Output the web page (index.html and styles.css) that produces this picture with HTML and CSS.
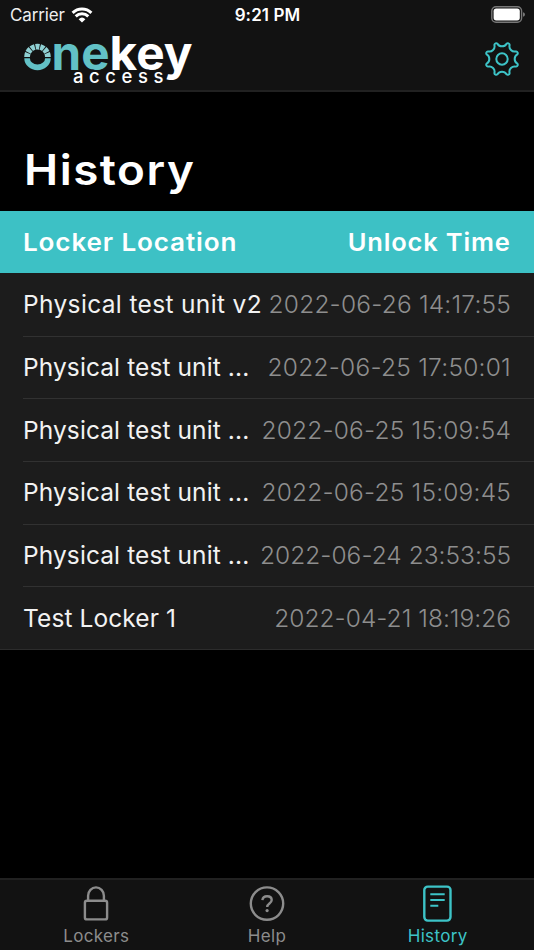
FILE: index.html
```html
<!DOCTYPE html>
<html lang="en">
<head>
<meta charset="utf-8">
<meta name="viewport" content="width=device-width">
<title>History</title>
<link rel="stylesheet" href="styles.css">
</head>
<body>
<div class="app">
  <header class="top">
    <div class="status">
      <div class="carrier"><span>Carrier</span>
        <svg width="22" height="16" viewBox="0 0 22 16"><path d="M11 15.6 7.6 12.2a5 5 0 0 1 6.8 0Z" fill="#fff"/><path d="M4.7 9.3a9.1 9.1 0 0 1 12.6 0M1.6 5.8a13.5 13.5 0 0 1 18.8 0" fill="none" stroke="#fff" stroke-width="3"/></svg>
      </div>
      <div class="clock">9:21 PM</div>
      <svg class="battery" width="34" height="18" viewBox="0 0 34 18"><rect x=".8" y=".8" width="29.8" height="15.4" rx="4.2" fill="none" stroke="#777" stroke-width="1.4"/><rect x="2.6" y="2.6" width="26.2" height="11.8" rx="2.6" fill="#fff"/><path d="M32 6.3q2 .5 2 2.2t-2 2.2z" fill="#777"/></svg>
    </div>
    <div class="nav">
      <svg class="logo" width="174" height="56" viewBox="22 32 174 56">
        <path d="M27.1 58.2a10.4 9.2 0 0 0 20.8 0" fill="none" stroke="#62c1c6" stroke-width="5.6"/>
        <path d="M27.1 57a10.4 10.4 0 0 1 20.8 0" fill="none" stroke="#8fd0d3" stroke-width="5.8" pathLength="100" stroke-dasharray="12 2.67"/>
        <text class="ne" x="51.5" y="69.7" textLength="58" lengthAdjust="spacingAndGlyphs">ne</text>
        <text class="key" x="109.5" y="69.7" textLength="83" lengthAdjust="spacingAndGlyphs">key</text>
        <text class="access" x="73" y="83.3" textLength="90.5">access</text>
      </svg>
      <svg class="gear" width="36" height="36" viewBox="-18 -18 36 36" fill="none" stroke="#3dc3c7" stroke-width="2" stroke-linejoin="round"><path d="M-4.54-15.34A5.2 5.2 0 0 0 4.54-15.34A1.9 1.9 0 0 1 7.63-14.06A5.2 5.2 0 0 0 14.06-7.63A1.9 1.9 0 0 1 15.34-4.54A5.2 5.2 0 0 0 15.34 4.54A1.9 1.9 0 0 1 14.06 7.63A5.2 5.2 0 0 0 7.63 14.06A1.9 1.9 0 0 1 4.54 15.34A5.2 5.2 0 0 0-4.54 15.34A1.9 1.9 0 0 1-7.63 14.06A5.2 5.2 0 0 0-14.06 7.63A1.9 1.9 0 0 1-15.34 4.54A5.2 5.2 0 0 0-15.34-4.54A1.9 1.9 0 0 1-14.06-7.63A5.2 5.2 0 0 0-7.63-14.06A1.9 1.9 0 0 1-4.54-15.34Z"/><circle r="5.7"/></svg>
    </div>
  </header>
  <main>
    <h1>History</h1>
    <div class="list">
      <div class="row head"><span class="location">Locker Location</span><span class="unlock">Unlock Time</span></div>
      <div class="row"><span class="name">Physical test unit v2</span><time class="d1">2022-06-26 14:17:55</time></div>
      <div class="row"><span class="name cut">Physical test unit ...</span><time class="d2">2022-06-25 17:50:01</time></div>
      <div class="row"><span class="name cut">Physical test unit ...</span><time>2022-06-25 15:09:54</time></div>
      <div class="row"><span class="name cut">Physical test unit ...</span><time>2022-06-25 15:09:45</time></div>
      <div class="row"><span class="name cut">Physical test unit ...</span><time class="d5">2022-06-24 23:53:55</time></div>
      <div class="row"><span class="name cut">Test Locker 1</span><time class="d6">2022-04-21 18:19:26</time></div>
    </div>
  </main>
  <nav class="tabs">
    <div class="tab"><svg width="40" height="40" viewBox="0 0 40 40" fill="none" stroke="currentColor" stroke-width="2.4"><rect x="8.9" y="15.8" width="22.2" height="18.6" rx="2"/><path d="M12.1 15.7v-4.9a7.9 8.4 0 0 1 15.8 0v4.9"/></svg><span>Lockers</span></div>
    <div class="tab"><svg width="40" height="40" viewBox="0 0 40 40" fill="none" stroke="currentColor" stroke-width="2.4"><circle cx="20" cy="18.6" r="16.2"/><path d="M15.4 15.1c.3-2.5 2.1-3.9 4.7-3.9 2.8 0 4.6 1.5 4.6 3.8 0 3.7-4.5 3.4-4.5 7.1"/><circle cx="20.1" cy="25.6" r="1.6" fill="currentColor" stroke="none"/></svg><span>Help</span></div>
    <div class="tab active"><svg width="40" height="40" viewBox="0 0 40 40" fill="none" stroke="currentColor" stroke-width="2.4"><rect x="6.3" y="1.6" width="26.2" height="34" rx="3.5"/><path d="M12.3 9.2h14.4M12.3 15h14.4M12.3 20.8h8" stroke-width="2"/></svg><span>History</span></div>
  </nav>
</div>
</body>
</html>
```
FILE: styles.css
```css
* { box-sizing: border-box; }
body { margin: 0; background: #000; color: #fff; font-family: Inter, "Liberation Sans", sans-serif; }
svg { display: block; flex: none; overflow: visible; }
.app { height: 950px; display: flex; flex-direction: column; overflow: hidden; }
.top { height: 92px; background: #121212; border-bottom: 2px solid #212121; }
.status { height: 30px; padding: 0 9px 0 10px; display: grid; grid-template-columns: 1fr auto 1fr; align-items: center; }
.carrier { display: flex; align-items: center; gap: 6px; font-size: 17px; letter-spacing: -.15px; color: #eee; }
.clock { font-size: 17px; font-weight: 600; letter-spacing: .1px; }
.battery { justify-self: end; }
.nav { height: 60px; padding: 2px 14px 0 22px; display: flex; justify-content: space-between; align-items: flex-start; }
.gear { margin-top: 9.4px; }
.ne { fill: #62c1c6; font-size: 47px; font-weight: 700; }
.key { fill: #fff; font-size: 47px; font-weight: 700; }
.access { fill: #fff; font-size: 18.5px; font-weight: 500; }
main { flex: 1; }
h1 { margin: 0; height: 118.5px; padding: 50px 0 0 22px; font-size: 42px; line-height: 56px; font-weight: 600; letter-spacing: 1.4px; transform: scaleX(1.09); transform-origin: 0 0; width: 300px; }
.list { background: #1c1c1c; border-bottom: 1.5px solid #2c2c2c; }
.row { height: 62.67px; margin-left: 23px; padding-right: 23px; display: flex; justify-content: space-between; align-items: center; font-size: 24.5px; white-space: nowrap; }
.row + .row + .row { border-top: 1.4px solid #313131; padding-bottom: 1px; }
.head { margin-left: 0; padding-left: 23px; background: #3dc1c5; font-weight: 600; letter-spacing: .8px; }
.location { transform: scaleX(1.065); transform-origin: left; }
.unlock { transform: scaleX(1.04); transform-origin: right; }
.name { letter-spacing: .35px; font-weight: 400; color: #f2f2f2; }
.cut { letter-spacing: .1px; }
time { color: #8e8e8e; font-weight: 350; letter-spacing: .2px; }
.d2 { letter-spacing: .25px; }
.d5, .d6 { letter-spacing: .02px; }
.tabs { height: 72px; background: #121212; border-top: 2px solid #212121; padding: 5px 11px 0; display: grid; grid-template-columns: repeat(3, 1fr); }
.tab { display: flex; flex-direction: column; align-items: center; color: #8c8c8c; font-size: 17px; line-height: 22px; letter-spacing: .35px; }
.active { color: #3dc3c7; }
```
